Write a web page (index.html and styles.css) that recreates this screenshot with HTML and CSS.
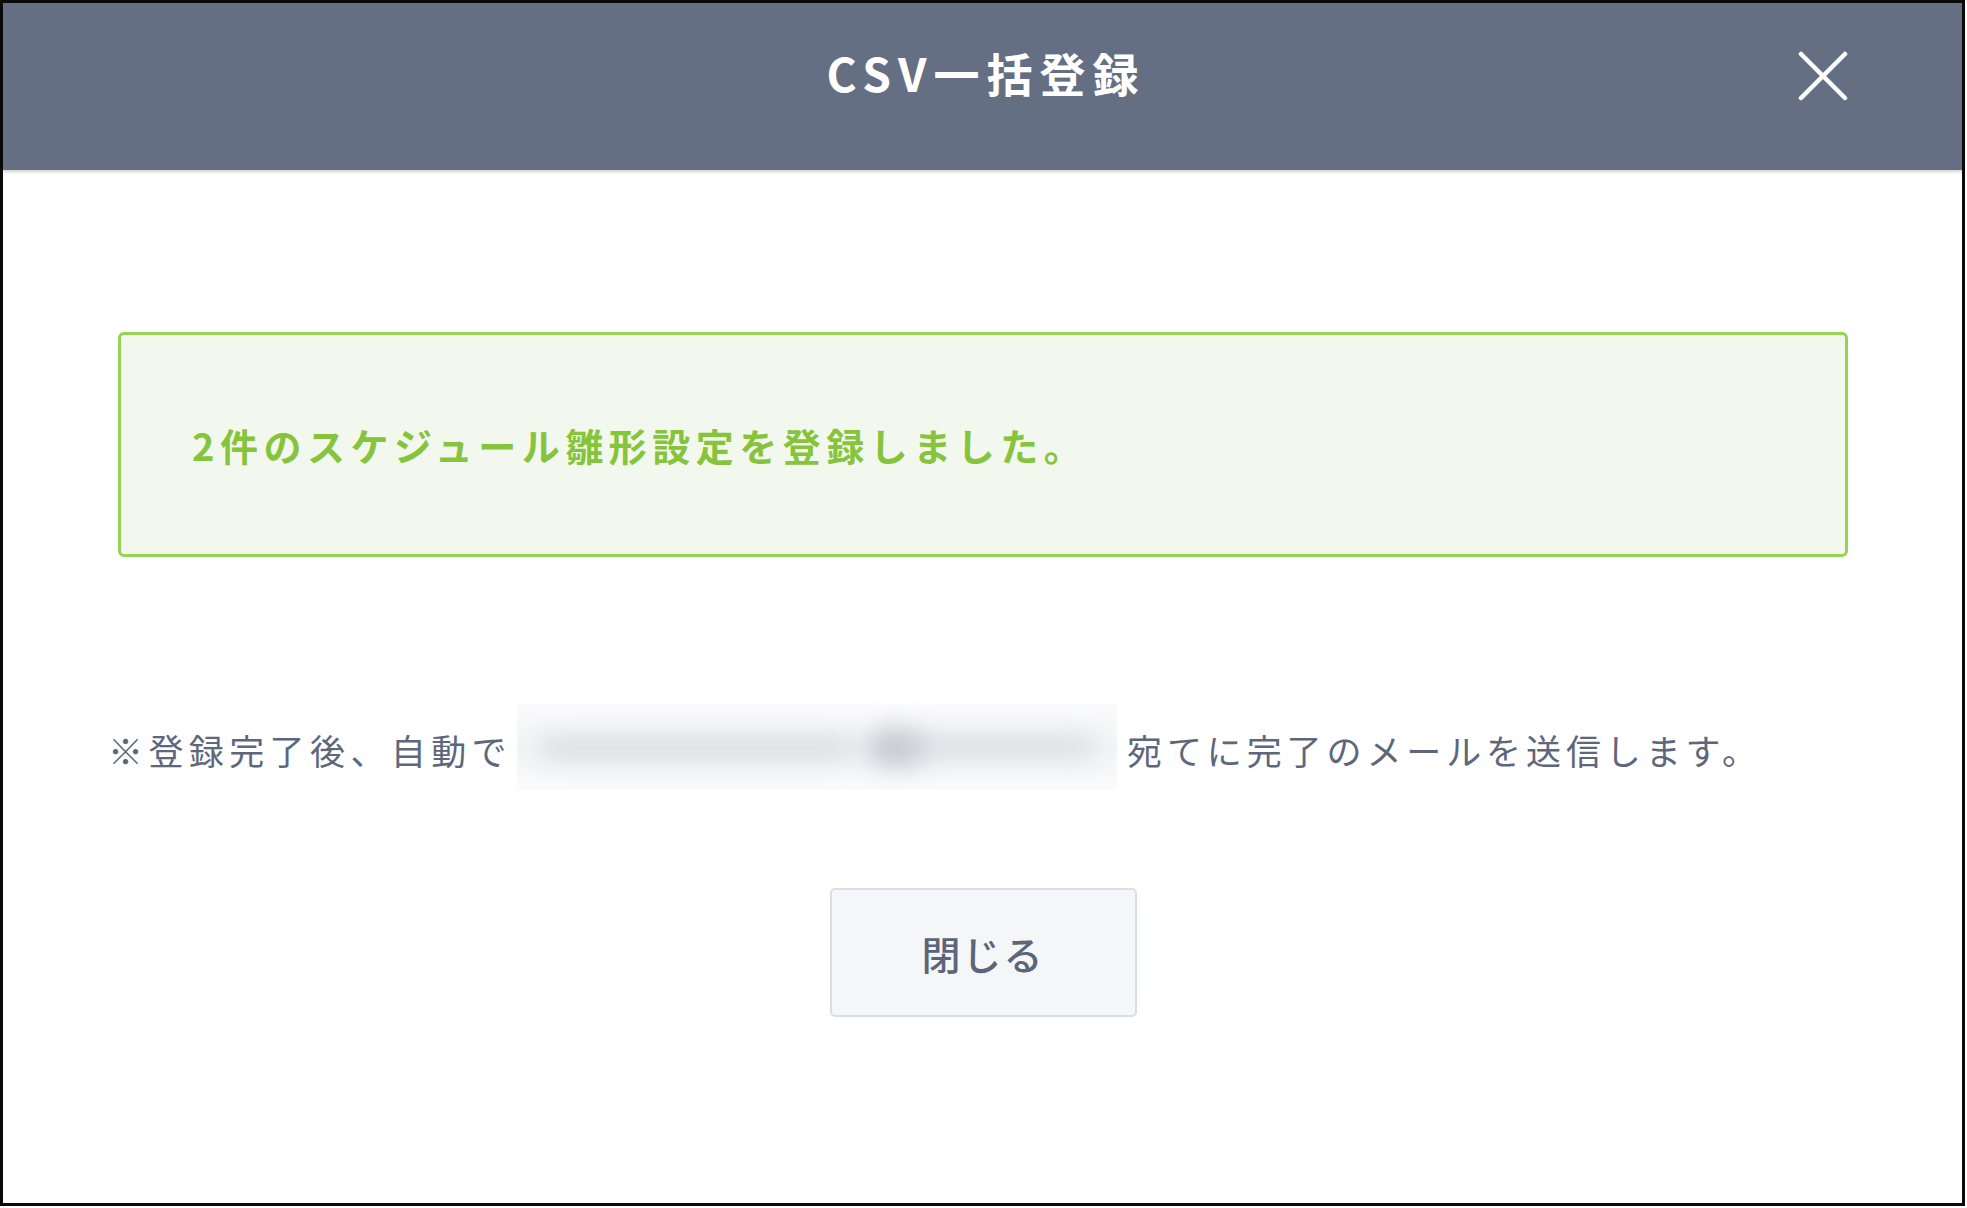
FILE: index.html
```html
<!DOCTYPE html>
<html lang="ja">
<head>
<meta charset="utf-8">
<title>CSV一括登録</title>
<link rel="stylesheet" href="styles.css">
</head>
<body>
<div class="frame">
  <header class="header">
    <div class="header-spacer"></div>
    <h1 class="title">CSV一括登録</h1>
    <button class="close" aria-label="閉じる">
      <svg width="50" height="50" viewBox="0 0 50 50"><path d="M3 3 L47 47 M47 3 L3 47" stroke="#ffffff" stroke-width="4.5" stroke-linecap="round" fill="none"/></svg>
    </button>
  </header>
  <main class="content">
    <div class="success">2件のスケジュール雛形設定を登録しました。</div>
    <div class="note">
      <span class="note-text">※登録完了後、自動で</span>
      <span class="masked" aria-hidden="true">
        <span class="blob blob-a"></span>
        <span class="blob blob-b"></span>
        <span class="blob blob-c"></span>
      </span>
      <span class="note-text note-right">宛てに完了のメールを送信します。</span>
    </div>
    <div class="actions">
      <button class="btn">閉じる</button>
    </div>
  </main>
</div>
</body>
</html>
```
FILE: styles.css
```css
html, body {
  margin: 0;
  padding: 0;
  background: #ffffff;
}
body {
  font-family: "Noto Sans CJK JP", "Noto Sans", sans-serif;
}
.frame {
  width: 1965px;
  height: 1206px;
  box-sizing: border-box;
  border: 3px solid #0a0a0a;
  background: #ffffff;
  overflow: hidden;
}
.header {
  height: 167px;
  box-sizing: border-box;
  background: #656f83;
  padding: 34px 114px 0 114px;
  display: grid;
  grid-template-columns: 1fr auto 1fr;
  align-items: start;
  box-shadow: 0 2px 3px rgba(0, 0, 0, 0.18);
  position: relative;
}
.title {
  margin: 0;
  color: #ffffff;
  font-size: 46px;
  font-weight: 700;
  line-height: 70px;
  letter-spacing: 7px;
  white-space: nowrap;
  padding-left: 7px;
}
.close {
  justify-self: end;
  margin-top: 14px;
  width: 50px;
  height: 50px;
  padding: 0;
  border: none;
  background: transparent;
  display: flex;
  cursor: pointer;
}
.content {
  padding: 162px 114px 0 115px;
}
.success {
  height: 225px;
  box-sizing: border-box;
  border: 3px solid #95d452;
  border-radius: 6px;
  background: #f3f8ee;
  color: #86c43c;
  font-size: 38px;
  font-weight: 700;
  letter-spacing: 5.5px;
  display: flex;
  align-items: center;
  padding: 0 0 0 71px;
  line-height: 1.2;
}
.note {
  margin-top: 146px;
  margin-left: -10px;
  display: flex;
  align-items: center;
  color: #5d677b;
  font-size: 35px;
  letter-spacing: 5.4px;
  line-height: 1.3;
}
.note-text {
  white-space: nowrap;
  padding-top: 6px;
}
.note-right {
  letter-spacing: 4.9px;
}
.masked {
  position: relative;
  width: 600px;
  height: 87px;
  margin: 0 10px 0 5px;
  background: linear-gradient(to bottom, #fbfbfc 0%, #f3f4f6 50%, #fbfbfc 100%);
  overflow: hidden;
  flex: none;
}
.blob {
  position: absolute;
  border-radius: 20px;
  filter: blur(12px);
}
.blob-a {
  left: 20px;
  top: 32px;
  width: 320px;
  height: 26px;
  background: #dcdfe3;
}
.blob-b {
  left: 360px;
  top: 31px;
  width: 220px;
  height: 26px;
  background: #dde0e4;
}
.blob-c {
  left: 350px;
  top: 28px;
  width: 56px;
  height: 34px;
  background: #c7cbd2;
}
.actions {
  margin-top: 98px;
  display: flex;
  justify-content: center;
}
.btn {
  width: 307px;
  height: 129px;
  box-sizing: border-box;
  border: 2px solid #d8dee8;
  border-radius: 5px;
  background: #f5f6f8;
  color: #5c6579;
  font-family: "Noto Sans CJK JP", "Noto Sans", sans-serif;
  font-size: 39px;
  font-weight: 500;
  letter-spacing: 2px;
  padding: 0;
  cursor: pointer;
}
```
